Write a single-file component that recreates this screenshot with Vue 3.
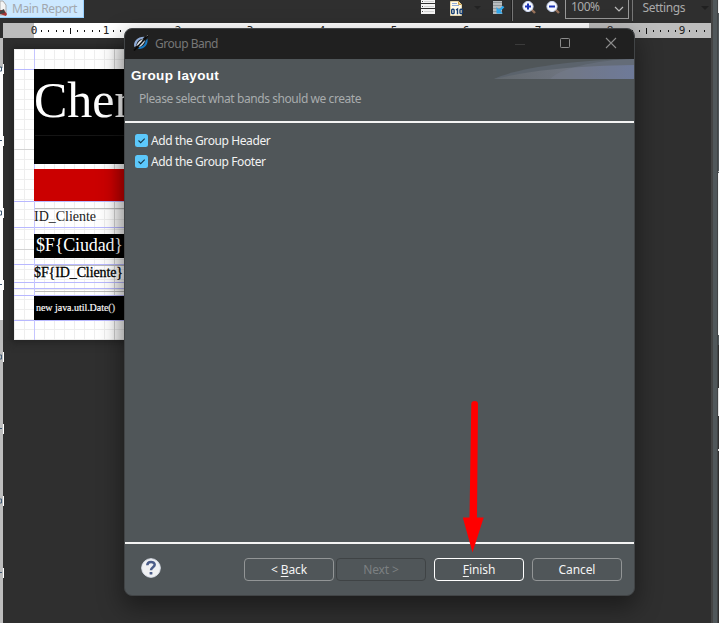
<script setup>
const unit = 72
const ticks = Array.from({ length: 95 }, (_, i) => ({
  x: 34 + i * 7.2,
  mid: i % 10 === 5,
  label: i % 10 === 0 ? String(i / 10) : ''
}))
const sideMarks = Array.from({ length: 8 }, (_, i) => 69 + i * unit)
const guides = [69, 201, 227, 264, 282, 288, 295, 320]
const frames = [208, 265, 291]
</script>

<template>
  <div class="screen">
    <header class="toolbar">
      <div class="tab">
        <svg width="8" height="17" viewBox="0 0 8 17">
          <path d="M0 1H3L6 5V15H0Z" fill="#f4f4f4" stroke="#aaa" />
          <path d="M0 10L4 10L7 14L6 16L0 14Z" fill="#a33" />
          <path d="M0 11L4 9L5 13L0 14Z" fill="#444" />
        </svg>
        <span>Main Report</span>
      </div>
      <div class="tools">
        <svg class="tools-icons" width="164" height="21" viewBox="0 0 164 21">
          <g fill="#f4f4f4">
            <rect x="6" y="0" width="14" height="3" />
            <rect x="6" y="4" width="14" height="4" />
            <rect x="6" y="9" width="14" height="5" />
          </g>
          <path d="M9 1.500H19M9 6.500H19M9 11.500H19" stroke="#d2d2d2" />
          <path d="M7 1.500h1M7 6.500h1M7 11.500h1" stroke="#444" />
          <path d="M35.500 1.500H43.500L46.500 4.500V15.500H35.500Z" fill="#fffbe8" stroke="#e5d6ad" />
          <path d="M43.500 1.500V4.500H46.500" fill="#edca75" stroke="#c79b48" />
          <path d="M37 3.500h5M37 5.500h7" stroke="#8fabd8" />
          <g fill="none" stroke="#173e73" stroke-width="1.400">
            <rect x="36.700" y="9.200" width="2.400" height="4.400" rx=".8" />
            <path d="M41 10L42.500 9V14.300" />
            <rect x="45" y="9.200" width="2.400" height="4.400" rx=".8" />
          </g>
          <path d="M59 6H66L62.500 9.500Z" fill="#222" />
          <rect x="78" y="1" width="9" height="13" fill="#b9bdbf" />
          <path d="M78 2.500H87M78 5.500H87M78 8.500H87M78 11.500H87" stroke="#92989b" />
          <path d="M88.500 6.500L83.500 11.500" fill="none" stroke="#2fa8ed" stroke-width="2.400" />
          <path d="M81.500 7V13.500H88Z" fill="#2fa8ed" />
          <path d="M96.500 0V21" stroke="#202020" />
          <path d="M97.500 0V21" stroke="#777" />
          <g v-for="(x, i) in [113, 137]" :key="x">
            <path :d="`M${x + 3} 9L${x + 7} 13`" stroke="#98735b" stroke-width="2.400" />
            <circle :cx="x" cy="6.500" r="5.100" fill="#f5f8ff" stroke="#cad5ee" />
            <path :d="`M${x - 3} 6.500H${x + 3}` + (i ? '' : `M${x} 3.500V9.500`)" stroke="#1b32b5" stroke-width="2" />
          </g>
        </svg>
        <div class="zoom">
          <span>100%</span>
          <svg width="10" height="7" viewBox="0 0 10 7"><path d="M1 1L5 5L9 1" fill="none" stroke="#bbb" stroke-width="1.200" /></svg>
        </div>
        <div class="settings">
          <span>Settings</span>
          <svg width="8" height="5" viewBox="0 0 8 5"><path d="M0 0H8L4 4Z" fill="#202020" /></svg>
        </div>
      </div>
    </header>

    <svg class="ruler" width="711" height="15" viewBox="0 23 711 15">
      <rect x="3" y="23" width="31" height="15" fill="#bdbdbd" />
      <rect x="34" y="23" width="555" height="15" fill="#fff" />
      <rect x="589" y="23" width="122" height="15" fill="#bdbdbd" />
      <g v-for="t in ticks" :key="t.x">
        <text v-if="t.label" :x="t.x" y="34" class="num">{{ t.label }}</text>
        <rect v-else-if="t.mid" :x="Math.round(t.x)" y="28" width="1" height="6" fill="#111" />
        <rect v-else :x="Math.round(t.x)" y="30" width="1" height="2" fill="#111" />
      </g>
    </svg>

    <main class="workspace">
      <svg class="side-ruler" width="5" height="585" viewBox="0 38 5 585">
        <rect y="38" width="3" height="585" fill="#bdbdbd" />
        <rect y="68" width="3" height="252" fill="#fff" />
        <g v-for="(y, i) in sideMarks" :key="y">
          <rect x="3" :y="y - 5" width="1" height="10" fill="#fff" />
          <path :d="i % 2 ? `M0 ${y - .5}H2` : `M0 ${y - 2}H1.500V${y + 2}H0`" fill="none" stroke="#405a75" />
        </g>
      </svg>

      <svg class="page" width="111" height="291" viewBox="14 49 111 291">
        <defs>
          <pattern id="grid" x="34" y="69" width="10" height="10" patternUnits="userSpaceOnUse">
            <path d="M.5 0V10M0 .5H10" stroke="#eee" fill="none" />
          </pattern>
          <linearGradient id="edge">
            <stop offset="0" stop-color="#000" stop-opacity="0" />
            <stop offset="1" stop-color="#000" stop-opacity=".12" />
          </linearGradient>
        </defs>
        <rect x="14" y="49" width="111" height="291" fill="#fff" />
        <rect x="14" y="49" width="111" height="291" fill="url(#grid)" />
        <path d="M114.500 49V340M14 149.500H125M14 249.500H125" stroke="#d4d4d4" />
        <path v-for="y in frames" :key="y" :d="`M34 ${y + .5}H125`" stroke="#bbb" />
        <path v-for="y in guides" :key="y" :d="`M14 ${y + .5}H125`" stroke="#b8b8ff" />
        <path d="M34.500 49V340" stroke="#c5c5ff" />
        <rect x="34" y="69" width="91" height="95" fill="#000" />
        <path d="M35 135.500H125" stroke="#151515" />
        <rect x="34" y="169" width="91" height="32" fill="#cb0000" />
        <rect x="34" y="234" width="91" height="24" fill="#000" />
        <rect x="34" y="296" width="91" height="24" fill="#000" />
        <g class="report-text">
          <text x="34" y="117" font-size="50" fill="#fff">Cher</text>
          <text x="34" y="221" font-size="14" textLength="62" fill="#222">ID_Cliente</text>
          <text x="36" y="251" font-size="18" textLength="87" fill="#fff">$F{Ciudad}</text>
          <text x="34" y="277" font-size="14" textLength="89" fill="#000" stroke="#000" stroke-width=".3">$F{ID_Cliente}</text>
          <text x="36" y="311" font-size="10" textLength="79" fill="#fff" stroke="#fff" stroke-width=".15">new java.util.Date()</text>
        </g>
        <rect x="109" y="49" width="16" height="291" fill="url(#edge)" />
      </svg>
    </main>

    <aside class="rail">
      <svg width="8" height="623" viewBox="0 0 8 623">
        <rect width="2" height="623" fill="#444" />
        <rect x="2" width="4" height="623" fill="#50575a" />
        <rect x="6" width="1" height="623" fill="#414446" />
        <rect x="7" width="1" height="623" fill="#50575a" />
        <rect x="7" y="0" width="1" height="13" fill="#eee" />
        <rect x="7" y="171" width="1" height="1" fill="#bbb" />
        <rect x="7" y="173" width="1" height="162" fill="#f3f3f3" />
        <rect x="7" y="345" width="1" height="43" fill="#303030" />
        <rect x="7" y="388" width="1" height="28" fill="#dedede" />
        <rect x="7" y="416" width="1" height="207" fill="#303030" />
        <rect x="7" y="449" width="1" height="2" fill="#ddd" />
      </svg>
    </aside>

    <section class="dialog">
      <div class="titlebar">
        <svg class="logo" width="16" height="16" viewBox="0 0 16 16">
          <path d="M1.300 12C0 6 5 1.500 11.500 1.800L9.500 4C6 4 3.500 7 3.300 11Z" fill="#8fabd6" />
          <path d="M5 14C11 14.500 15.500 10 14.500 3.500L12.500 6C12.500 9 10 11.500 6.500 12Z" fill="#1779c4" />
          <ellipse cx="8" cy="8" rx="4.600" ry="2.300" transform="rotate(-45 8 8)" fill="#c9d3dc" />
          <path d="M1 15.500L15 .5" stroke="#090909" stroke-width="1.700" />
          <path d="M4 10.500L8.500 5.800" stroke="#f4f4f4" />
          <path d="M13.500 1.200L15 0" stroke="#999" stroke-width=".7" />
        </svg>
        <span class="title">Group Band</span>
        <svg class="controls" width="102" height="14" viewBox="0 0 102 14">
          <path d="M0 7.500H10" stroke="#3b3b3b" />
          <rect x="45.500" y="1.500" width="9" height="9" rx=".8" fill="none" stroke="#8c8c8c" />
          <path d="M91 1L101 11M101 1L91 11" stroke="#8c8c8c" stroke-width="1.100" />
        </svg>
      </div>
      <div class="banner">
        <div class="banner-copy">
          <h1>Group layout</h1>
          <p>Please select what bands should we create</p>
        </div>
        <svg class="wave" width="140" height="20" viewBox="0 0 140 20">
          <defs>
            <linearGradient id="wave">
              <stop offset="0" stop-color="#62686d" />
              <stop offset=".5" stop-color="#6e747f" />
              <stop offset="1" stop-color="#69779b" />
            </linearGradient>
          </defs>
          <path d="M0 20C20 10 75 1 140 0V20Z" fill="#5b636c" />
          <path d="M0 20C35 12 75 7 140 6V20Z" fill="url(#wave)" />
          <path d="M56 20C65 10 100 1 140 0V20Z" fill="#7b8296" opacity=".3" />
        </svg>
      </div>
      <div class="options">
        <label v-for="name in ['Header', 'Footer']" :key="name" class="option">
          <svg width="13" height="13" viewBox="0 0 13 13">
            <rect width="13" height="13" rx="2.500" fill="#5cc8fb" />
            <path d="M3.500 6.500L5.700 8.700L9.700 4.700" fill="none" stroke="#17394b" stroke-width="1.100" />
          </svg>
          <span>Add the Group {{ name }}</span>
        </label>
      </div>
      <footer class="footer">
        <svg class="help" width="20" height="20" viewBox="0 0 20 20">
          <circle cx="10" cy="10" r="9.300" fill="#f0f1f3" stroke="#dce1eb" />
          <path d="M6.300 7.300C6.300 2.800 13.700 3 13.700 6.800C13.700 9.200 10 9.300 10 12.200" fill="none" stroke="#4b5d89" stroke-width="2.500" />
          <rect x="8.600" y="14" width="2.800" height="2.600" rx=".6" fill="#4b5d89" />
        </svg>
        <div class="buttons">
          <button class="btn">&lt; <u>B</u>ack</button>
          <button class="btn off">Next &gt;</button>
          <button class="btn primary"><u>F</u>inish</button>
          <button class="btn cancel">Cancel</button>
        </div>
      </footer>
    </section>

    <svg class="arrow" width="22" height="154" viewBox="463 399 22 154">
      <path d="M471.300 404Q471.300 401 474.700 401Q478 401 478 404L477 517.500H483.700L472.500 552.500L462.800 517.500H469.500Z" fill="#f00" />
    </svg>
  </div>
</template>

<style>
body { margin: 0; background: #2f2f2f; overflow: hidden; }
</style>

<style scoped>
.screen {
  position: relative;
  width: 719px;
  height: 623px;
  overflow: hidden;
  background: #2f2f2f;
  font-family: "Noto Sans", "Open Sans", sans-serif;
  font-size: 12px;
}
.screen svg { display: block; flex: none; }
.toolbar { display: flex; justify-content: space-between; height: 23px; }
.tab {
  display: flex;
  box-sizing: border-box;
  width: 84px;
  height: 18px;
  gap: 4px;
  background: #cce8ff;
  border-right: 1px solid #99d1ff;
  border-bottom: 1px solid #99d1ff;
  color: #a2a7ad;
  line-height: 17px;
  white-space: nowrap;
  letter-spacing: -.4px;
}
.tools { display: flex; width: 304px; }
.zoom {
  display: flex;
  box-sizing: border-box;
  width: 64px;
  height: 19px;
  margin-left: -14px;
  padding: 0 4px 0 5px;
  border: 1px solid #999;
  border-top: 0;
  align-items: center;
  justify-content: space-between;
  color: #aaa;
  line-height: 14px;
}
.zoom span { height: 19px; letter-spacing: -.5px; }
.settings {
  display: flex;
  height: 21px;
  width: 77px;
  margin-left: 3px;
  padding-left: 10px;
  border-left: 1px solid #777;
  gap: 16px;
  color: #aaa;
  line-height: 16px;
  letter-spacing: -.4px;
}
.settings svg { margin-top: 6px; }
.num { font: 11px "DejaVu Sans Mono", monospace; text-anchor: middle; fill: #222; }
.workspace { display: flex; gap: 9px; }
.page { margin-top: 11px; box-shadow: 0 0 7px 3px #242424; }
.report-text { font-family: "Liberation Serif", serif; }
.rail { position: absolute; top: 0; right: 0; }
.dialog {
  position: absolute;
  left: 124px;
  top: 28px;
  display: flex;
  flex-direction: column;
  box-sizing: border-box;
  width: 511px;
  height: 568px;
  overflow: hidden;
  border: 1px solid #414446;
  border-radius: 8px;
  background: #505659;
  box-shadow: 0 10px 24px 2px #0006;
}
.titlebar { display: flex; height: 30px; align-items: center; background: #202020; }
.logo { margin: 0 0 2px 8px; }
.title { margin-left: 6px; color: #777; line-height: 28px; letter-spacing: -.5px; }
.controls { margin-left: auto; margin-right: 17px; }
.banner { display: flex; justify-content: space-between; height: 62px; border-bottom: 2px solid #f4f4f4; }
.banner-copy { padding-left: 6px; }
h1 { margin: 8px 0 0; font: bold 13.5px/18px "Liberation Sans", sans-serif; color: #fff; letter-spacing: .35px; }
p { margin: 5px 0 0 8px; color: #a8acad; line-height: 18px; letter-spacing: -.43px; white-space: nowrap; }
.options { display: flex; flex: 1; flex-direction: column; gap: 3px; padding: 8px 0 0 10px; }
.option { display: flex; height: 18px; align-items: center; gap: 3px; color: #f2f2f2; letter-spacing: -.4px; }
.footer { display: flex; height: 51px; border-top: 2px solid #f4f4f4; }
.help { margin: 14px 0 0 16px; }
.buttons { display: flex; margin: 14px 0 0 83px; gap: 2px; }
.btn {
  box-sizing: border-box;
  width: 90px;
  height: 23px;
  padding: 0;
  border: 1px solid #929596;
  border-radius: 4px;
  background: transparent;
  color: #f4f4f4;
  font: inherit;
  line-height: 20px;
  letter-spacing: -.1px;
}
.btn u { text-underline-offset: 2px; }
.off { border-color: #3f4345; color: #7c8082; }
.primary { margin-left: 6px; border-color: #fff; }
.cancel { margin-left: 6px; }
.arrow { position: absolute; left: 463px; top: 399px; }
</style>
